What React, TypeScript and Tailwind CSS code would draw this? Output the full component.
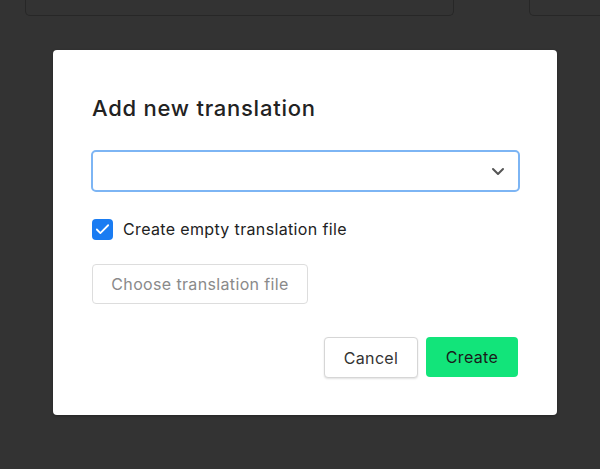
import { Check } from "lucide-react"

export default function App() {
  return (
    <div
      className="min-h-screen w-full overflow-hidden bg-[#333333] text-[#222222]"
      style={{ fontFamily: "Inter, 'Noto Sans', sans-serif" }}
    >
      {/* background cards peeking from the top */}
      <div className="flex h-[16px] gap-[75px] pl-[25px]">
        <div className="w-[429px] shrink-0 rounded-b-[5px] border-x border-b border-[#272727]" />
        <div className="w-[100px] shrink-0 rounded-b-[5px] border-x border-b border-[#272727]" />
      </div>

      <div className="ml-[53px] mt-[34px] flex h-[365px] w-[504px] flex-col rounded-[4px] bg-white px-[39px] pt-[42px] shadow-[0_1px_3px_rgba(0,0,0,0.3)]">
        <h2 className="text-[22px] font-medium leading-[32px] tracking-[0.75px] text-[#222]">Add new translation</h2>

        <div className="mt-[26px] flex h-[42px] w-[429px] -ml-[1px] items-center justify-end rounded-[5px] border-2 border-[#7db5f4] pr-[13px]">
          <svg width="14" height="9" viewBox="0 0 14 9" fill="none">
            <path d="M2 2l5 5 5-5" stroke="#555" strokeWidth="2" strokeLinecap="round" strokeLinejoin="round" />
          </svg>
        </div>

        <label className="mt-[26px] flex items-center gap-[10px]">
          <span className="flex h-[21px] w-[21px] items-center justify-center rounded-[4px] bg-[#1a7cf2]">
            <Check size={17} strokeWidth={2.5} color="white" />
          </span>
          <span className="text-[16px] leading-[22px] tracking-[0.35px] text-[#222]">Create empty translation file</span>
        </label>

        <div className="mt-[24px]">
          <button className="h-[40px] w-[216px] rounded-[4px] border border-[#dddddd] bg-white text-[16px] tracking-[0.35px] text-[#8a8a8a]">
            Choose translation file
          </button>
        </div>

        <div className="mt-[33px] flex justify-end gap-[8px]">
          <button className="h-[41px] w-[94px] rounded-[4px] border border-[#d6d6d6] bg-white text-[16px] tracking-[0.35px] text-[#333] shadow-[0_1px_2px_rgba(0,0,0,0.12)]">
            Cancel
          </button>
          <button className="h-[40px] w-[92px] rounded-[4px] bg-[#12e47a] text-[16px] tracking-[0.35px] text-[#1a1a1a]">
            Create
          </button>
        </div>
      </div>
    </div>
  )
}
